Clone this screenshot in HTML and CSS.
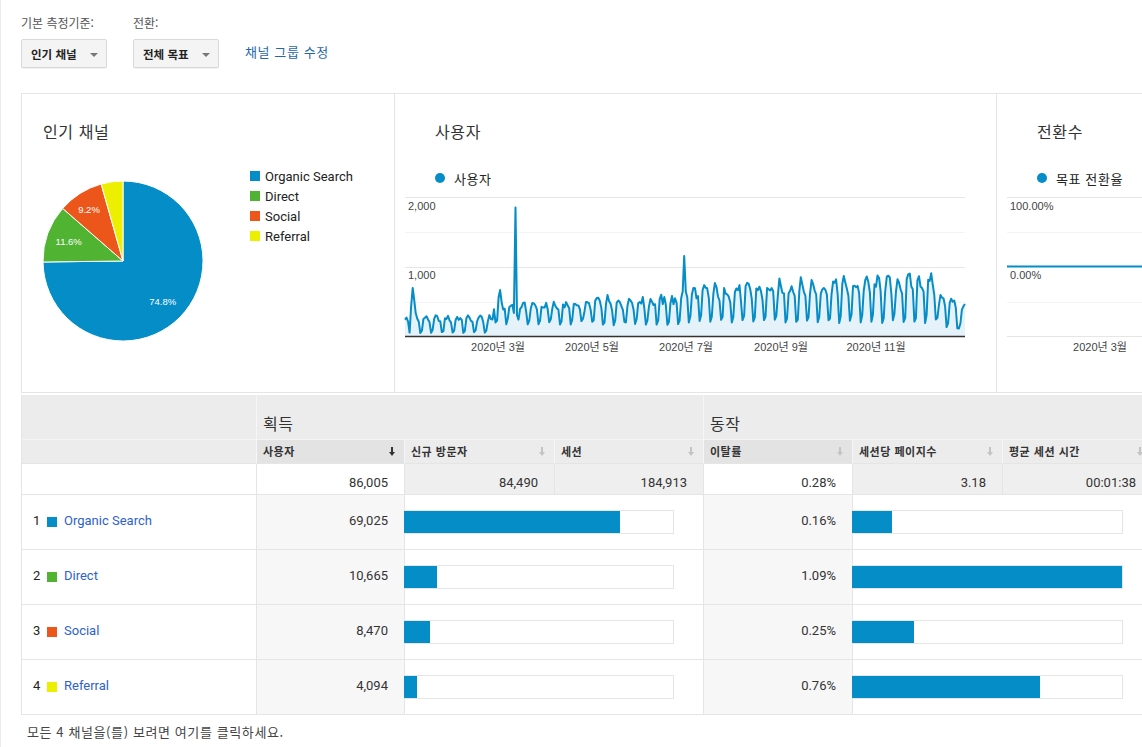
FILE: index.html
```html
<!DOCTYPE html>
<html lang="ko">
<head>
<meta charset="utf-8">
<title>인기 채널</title>
<link rel="stylesheet" href="styles.css">
</head>
<body>
<div class="page">
  <div class="controls">
    <div class="ctrl">
      <div class="ctrl-label">기본 측정기준:</div>
      <button class="dd">인기 채널<span class="caret"></span></button>
    </div>
    <div class="ctrl">
      <div class="ctrl-label">전환:</div>
      <div class="dd-row">
        <button class="dd">전체 목표<span class="caret"></span></button>
        <a class="edit-link">채널 그룹 수정</a>
      </div>
    </div>
  </div>

  <div class="dashboard">
    <div class="charts">
      <section class="panel pie-panel">
        <h2 class="panel-title">인기 채널</h2>
        <div class="pie-body">
          <svg class="pie" width="160" height="160" viewBox="0 0 160 160">
            <g stroke="#fff" stroke-width="1">
              <path d="M80,80 L80,0 A80,80 0 1 1 0.01,81.01 Z" fill="#058dc7"/>
              <path d="M80,80 L0.01,81.01 A80,80 0 0 1 19.68,27.45 Z" fill="#50b432"/>
              <path d="M80,80 L19.68,27.45 A80,80 0 0 1 58.16,3.04 Z" fill="#ed561b"/>
              <path d="M80,80 L58.16,3.04 A80,80 0 0 1 80,0 Z" fill="#edef00"/>
            </g>
            <g class="pie-label">
              <text x="119.7" y="124">74.8%</text>
              <text x="25.7" y="63.5">11.6%</text>
              <text x="46" y="32">9.2%</text>
            </g>
          </svg>
          <ul class="legend">
            <li><span class="sw sw-blue"></span>Organic Search</li>
            <li><span class="sw sw-green"></span>Direct</li>
            <li><span class="sw sw-orange"></span>Social</li>
            <li><span class="sw sw-yellow"></span>Referral</li>
          </ul>
        </div>
      </section>

      <section class="panel line-panel">
        <h2 class="panel-title">사용자</h2>
        <div class="series"><span class="dot"></span>사용자</div>
        <svg class="line-chart" width="601" height="170" viewBox="0 0 601 170">
          <line class="grid-major" x1="10" y1="7.5" x2="570" y2="7.5"/>
          <line class="grid-minor" x1="10" y1="42.5" x2="570" y2="42.5"/>
          <line class="grid-major" x1="10" y1="77.5" x2="570" y2="77.5"/>
          <line class="grid-minor" x1="10" y1="112.5" x2="570" y2="112.5"/>
          <path id="users-area" class="area" d=""/>
          <path id="users-line" class="line" d=""/>
          <line class="axis" x1="10" y1="146.5" x2="570" y2="146.5"/>
          <g class="axis-label">
            <text x="13" y="20">2,000</text>
            <text x="13" y="89">1,000</text>
          </g>
          <g class="axis-label mid">
            <text x="103" y="161">2020년 3월</text>
            <text x="197" y="161">2020년 5월</text>
            <text x="291" y="161">2020년 7월</text>
            <text x="386" y="161">2020년 9월</text>
            <text x="481" y="161">2020년 11월</text>
          </g>
        </svg>
      </section>

      <section class="panel conv-panel">
        <h2 class="panel-title">전환수</h2>
        <div class="series"><span class="dot"></span>목표 전환율</div>
        <svg class="line-chart" width="601" height="170" viewBox="0 0 601 170">
          <line class="grid-major" x1="10" y1="7.5" x2="570" y2="7.5"/>
          <line class="grid-minor" x1="10" y1="42.5" x2="570" y2="42.5"/>
          <line class="grid-minor" x1="10" y1="112.5" x2="570" y2="112.5"/>
          <line class="grid-major" x1="10" y1="146.5" x2="570" y2="146.5"/>
          <line class="flat" x1="10" y1="76.5" x2="570" y2="76.5"/>
          <g class="axis-label">
            <text x="13" y="20">100.00%</text>
            <text x="13" y="89">0.00%</text>
          </g>
          <g class="axis-label mid">
            <text x="103" y="161">2020년 3월</text>
          </g>
        </svg>
      </section>
    </div>

    <div class="table">
      <div class="c gh first"></div>
      <div class="c gh span3">획득</div>
      <div class="c gh span3">동작</div>

      <div class="c ch first"></div>
      <div class="c ch sorted">사용자<svg class="sort on" width="6" height="9" viewBox="0 0 6 9"><rect x="2" y="0" width="2" height="5"/><polygon points="0,5 6,5 3,9"/></svg></div>
      <div class="c ch">신규 방문자<svg class="sort" width="6" height="9" viewBox="0 0 6 9"><rect x="2" y="0" width="2" height="5"/><polygon points="0,5 6,5 3,9"/></svg></div>
      <div class="c ch">세션<svg class="sort" width="6" height="9" viewBox="0 0 6 9"><rect x="2" y="0" width="2" height="5"/><polygon points="0,5 6,5 3,9"/></svg></div>
      <div class="c ch sorted">이탈률<svg class="sort" width="6" height="9" viewBox="0 0 6 9"><rect x="2" y="0" width="2" height="5"/><polygon points="0,5 6,5 3,9"/></svg></div>
      <div class="c ch">세션당 페이지수<svg class="sort" width="6" height="9" viewBox="0 0 6 9"><rect x="2" y="0" width="2" height="5"/><polygon points="0,5 6,5 3,9"/></svg></div>
      <div class="c ch">평균 세션 시간<svg class="sort" width="6" height="9" viewBox="0 0 6 9"><rect x="2" y="0" width="2" height="5"/><polygon points="0,5 6,5 3,9"/></svg></div>

      <div class="c tot first"></div>
      <div class="c tot num">86,005</div>
      <div class="c tot num grey">84,490</div>
      <div class="c tot num grey">184,913</div>
      <div class="c tot num">0.28%</div>
      <div class="c tot num grey">3.18</div>
      <div class="c tot num grey">00:01:38</div>

      <div class="c row first"><span class="idx">1</span><span class="sw sw-blue"></span><a class="ch-link">Organic Search</a></div>
      <div class="c row num shade">69,025</div>
      <div class="c row barcell span2"><div class="bar"><div class="fill" style="width:80.26%"></div></div></div>
      <div class="c row num shade">0.16%</div>
      <div class="c row barcell span2 last"><div class="bar"><div class="fill" style="width:14.68%"></div></div></div>

      <div class="c row first"><span class="idx">2</span><span class="sw sw-green"></span><a class="ch-link">Direct</a></div>
      <div class="c row num shade">10,665</div>
      <div class="c row barcell span2"><div class="bar"><div class="fill" style="width:12.4%"></div></div></div>
      <div class="c row num shade">1.09%</div>
      <div class="c row barcell span2 last"><div class="bar"><div class="fill" style="width:100%"></div></div></div>

      <div class="c row first"><span class="idx">3</span><span class="sw sw-orange"></span><a class="ch-link">Social</a></div>
      <div class="c row num shade">8,470</div>
      <div class="c row barcell span2"><div class="bar"><div class="fill" style="width:9.85%"></div></div></div>
      <div class="c row num shade">0.25%</div>
      <div class="c row barcell span2 last"><div class="bar"><div class="fill" style="width:22.94%"></div></div></div>

      <div class="c row first"><span class="idx">4</span><span class="sw sw-yellow"></span><a class="ch-link">Referral</a></div>
      <div class="c row num shade">4,094</div>
      <div class="c row barcell span2"><div class="bar"><div class="fill" style="width:4.76%"></div></div></div>
      <div class="c row num shade">0.76%</div>
      <div class="c row barcell span2 last"><div class="bar"><div class="fill" style="width:69.7%"></div></div></div>
    </div>

    <p class="footer">모든 4 채널을(를) 보려면 여기를 클릭하세요.</p>
  </div>
</div>
<script src="script.js"></script>
</body>
</html>
```

FILE: styles.css
```css
* { box-sizing: border-box; }
html, body { margin: 0; padding: 0; overflow: hidden; background: #fff; }
body {
  width: 1142px;
  height: 747px;
  font-family: Roboto, "Noto Sans CJK KR", sans-serif;
  color: #333;
}
.page {
  padding-left: 21px;
  width: 1200px;
  height: 747px;
  box-shadow: inset 1px 0 0 #ececec;
}

/* controls */
.controls {
  display: flex;
  gap: 26px;
  height: 93px;
  padding-top: 15px;
}
.ctrl-label {
  font-family: "Noto Sans CJK KR", sans-serif;
  font-size: 12px;
  line-height: 16px;
  color: #555;
  margin-bottom: 8px;
}
.dd-row { display: flex; align-items: center; gap: 26px; }
.dd {
  display: flex;
  align-items: center;
  width: 86px;
  height: 29px;
  padding: 0 0 0 9px;
  border: 1px solid #d9d9d9;
  border-radius: 2px;
  background: #f4f4f4;
  box-shadow: 0 1px 1px rgba(0,0,0,0.06);
  font-family: "Noto Sans CJK KR", sans-serif;
  font-weight: bold;
  font-size: 11.5px;
  color: #222;
  cursor: pointer;
}
.caret {
  margin-left: auto;
  margin-right: 8px;
  margin-top: 2px;
  width: 0;
  height: 0;
  border-left: 4px solid transparent;
  border-right: 4px solid transparent;
  border-top: 4px solid #777;
}
.edit-link {
  font-family: "Noto Sans CJK KR", sans-serif;
  font-size: 13px;
  letter-spacing: 0.6px;
  color: #1f69a8;
  cursor: pointer;
  margin-top: -5px;
}

/* dashboard */
.dashboard { width: 1131px; }
.charts {
  display: flex;
  height: 300px;
  border-top: 1px solid #e5e5e5;
  border-bottom: 1px solid #e5e5e5;
  border-left: 1px solid #e5e5e5;
}
.panel { height: 100%; overflow: hidden; }
.pie-panel { width: 373px; border-right: 1px solid #e5e5e5; padding-left: 21px; }
.line-panel { width: 602px; border-right: 1px solid #e5e5e5; }
.conv-panel { flex: 1; }
.panel-title {
  margin: 27px 0 0;
  font-family: "Noto Sans CJK KR", sans-serif;
  font-weight: normal;
  font-size: 16px;
  line-height: 20px;
  letter-spacing: 0.6px;
  color: #333;
}
.line-panel .panel-title, .conv-panel .panel-title { margin-left: 40px; }

.pie-body { display: flex; margin-top: 25px; }
.pie { margin-top: 15px; flex: none; }
.pie-label text {
  font-family: "Liberation Sans", Arial, sans-serif;
  font-size: 9.5px;
  fill: #fff;
  text-anchor: middle;
}
.legend { list-style: none; margin: 0 0 0 47px; padding: 0; }
.legend li {
  display: flex;
  align-items: center;
  height: 20px;
  font-size: 13px;
  color: #222;
}
.sw { display: inline-block; width: 10px; height: 10px; flex: none; }
.legend .sw { margin-right: 5px; }
.sw-blue { background: #058dc7; }
.sw-green { background: #50b432; }
.sw-orange { background: #ed561b; }
.sw-yellow { background: #edef00; }

.series {
  display: flex;
  align-items: center;
  margin: 28px 0 0 40px;
  height: 18px;
  font-family: "Noto Sans CJK KR", sans-serif;
  font-size: 13px;
  letter-spacing: 0.6px;
  color: #222;
}
.dot {
  width: 10px; height: 10px;
  border-radius: 50%;
  background: #058dc7;
  margin-right: 9px;
}
.line-chart { display: block; margin-top: 3px; }
.grid-major { stroke: #e6e6e6; stroke-width: 1; }
.grid-minor { stroke: #f4f4f4; stroke-width: 1; }
.axis { stroke: #333; stroke-width: 1.3; }
.area { fill: #e6f2f9; }
.line { fill: none; stroke: #058dc7; stroke-width: 2; stroke-linejoin: round; }
.flat { stroke: #058dc7; stroke-width: 2; }
.axis-label text {
  font-family: "Liberation Sans", Arial, "Noto Sans CJK KR", sans-serif;
  font-size: 11px;
  fill: #444;
}
.axis-label.mid text { text-anchor: middle; }

/* table */
.table {
  display: grid;
  grid-template-columns: 234px 148px 150px 149px 149px 150px 150px;
  grid-template-rows: 45px 24px 31px 55px 55px 55px 55px;
  margin-top: 2px;
  border-left: 1px solid #e5e5e5;
  font-size: 13px;
}
.c { display: flex; align-items: center; }
.c:not(.first) { border-left: 1px solid #e5e5e5; }
.span3 { grid-column: span 3; }
.span2 { grid-column: span 2; }

.gh {
  background: #ececec;
  border-bottom: 1px solid #f4f4f4;
  align-items: flex-end;
  padding: 0 0 6px 6px;
  font-family: "Noto Sans CJK KR", sans-serif;
  font-size: 16px;
  line-height: 20px;
  letter-spacing: 0.6px;
  color: #333;
}
.gh:not(.first), .ch:not(.first) { border-left-color: #f6f6f6; }
.ch {
  background: #ececec;
  border-bottom: 1px solid #e5e5e5;
  justify-content: space-between;
  padding: 0 9px 2px 6px;
  font-family: "Noto Sans CJK KR", sans-serif;
  font-weight: bold;
  font-size: 11px;
  letter-spacing: 0.5px;
  color: #333;
}
.ch.sorted { background: #e3e3e3; }
.sort { fill: #c4c4c4; flex: none; margin-top: 1px; }
.sort.on { fill: #333; }

.tot {
  background: #fff;
  border-bottom: 1px solid #e5e5e5;
  padding-top: 6px;
}
.tot.grey { background: #efefef; }
.num { justify-content: flex-end; padding-right: 16px; color: #333; font-size: 13px; }

.row { border-bottom: 1px solid #e5e5e5; background: #fff; }
.row.num, .row.first { padding-bottom: 4px; }
.row.shade { background: #f7f7f7; }
.row.first { padding-left: 11px; }
.idx { width: 14px; color: #222; }
.row .sw { margin-right: 7px; margin-top: 4px; }
.ch-link { color: #2d62cc; cursor: pointer; }
.c.barcell { padding-right: 29px; }
.barcell .bar {
  flex: none;
  width: calc(100% + 1px);
  height: 24px;
  margin-left: -1px;
  border: 1px solid #e5e5e5;
  border-left: none;
  background: #fff;
}
.barcell .fill { height: 100%; background: #058dc7; }

.footer {
  margin: 8px 0 0;
  padding-left: 6px;
  font-family: "Noto Sans CJK KR", sans-serif;
  font-size: 13px;
  line-height: 18px;
  letter-spacing: 0.6px;
  color: #444;
}
```

FILE: script.js
```js
(function () {
  var N = 366;
  function rnd(i) {
    var x = Math.sin(i * 12.9898 + 78.233) * 43758.5453;
    return x - Math.floor(x);
  }
  var f = [0.12, 0.85, 1.0, 0.95, 0.9, 0.7, 0.0];
  var vals = [];
  for (var d = 0; d < N; d++) {
    var dow = (d + 3) % 7;
    var hi, lo;
    if (d < 58) { hi = 270; lo = 50; }
    else if (d < 120) { hi = 450; lo = 190; }
    else if (d < 180) { hi = 530; lo = 180; }
    else if (d < 348) { hi = 660 + (d - 180) * 1.1; lo = 210; }
    else { hi = 560; lo = 120; }
    var v = lo + (hi - lo) * f[dow];
    v *= 0.86 + rnd(d) * 0.28;
    vals.push(v);
  }
  vals[4] = 420; vals[5] = 690; vals[6] = 520; vals[7] = 330;
  vals[61] = 560; vals[62] = 660; vals[63] = 480;
  vals[72] = 1850; vals[71] = 330; vals[73] = 300;
  vals[181] = 640; vals[182] = 1150; vals[183] = 640;
  vals[361] = 110; vals[362] = 180; vals[363] = 380; vals[364] = 430; vals[365] = 460;

  var x0 = 10, w = 560, y0 = 146, k = 139 / 2000;
  var parts = [];
  for (var i = 0; i < N; i++) {
    var x = x0 + i * w / (N - 1);
    var y = y0 - vals[i] * k;
    parts.push(x.toFixed(1) + ',' + y.toFixed(1));
  }
  var line = 'M' + parts.join('L');
  var area = line + 'L' + (x0 + w) + ',' + y0 + 'L' + x0 + ',' + y0 + 'Z';
  document.getElementById('users-line').setAttribute('d', line);
  document.getElementById('users-area').setAttribute('d', area);
})();
```
